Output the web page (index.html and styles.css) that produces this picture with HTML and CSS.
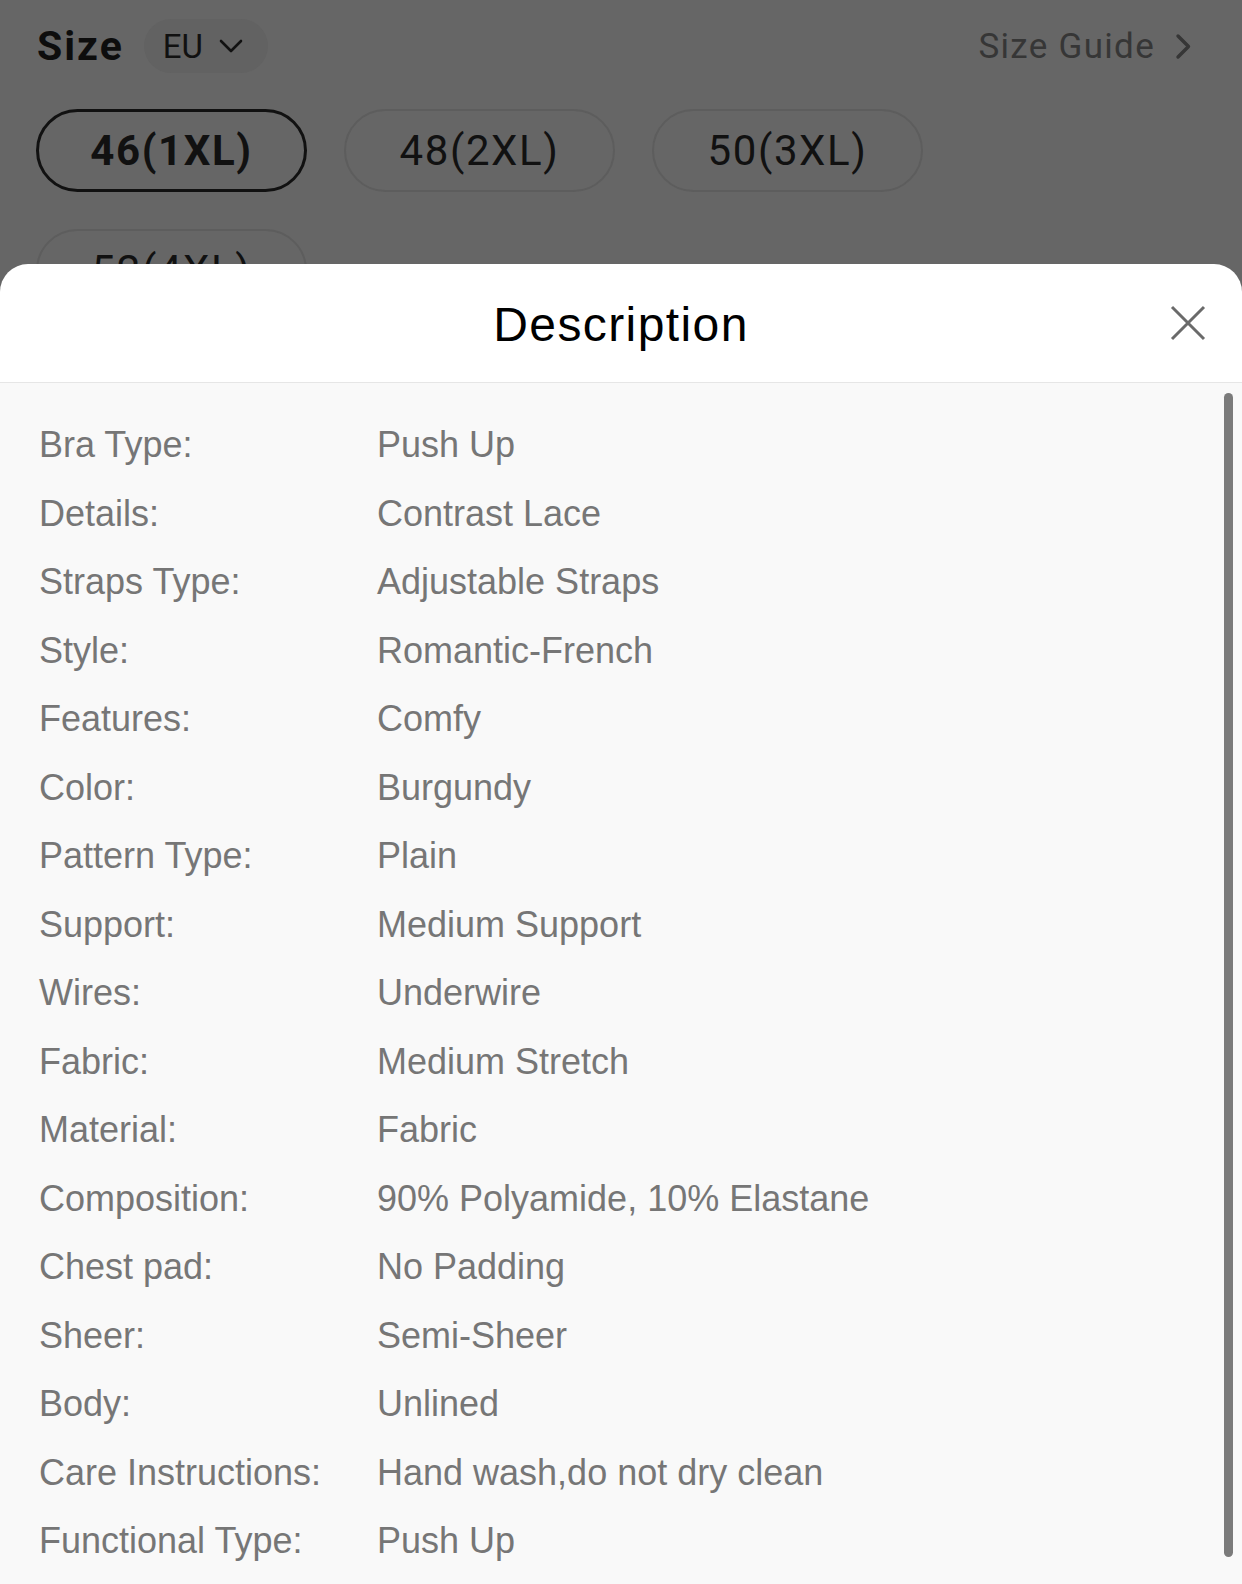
FILE: index.html
```html
<!DOCTYPE html>
<html lang="en">
<head>
    <meta charset="UTF-8">
    <meta name="viewport" content="width=device-width, initial-scale=1">
    <title>Description</title>
    <link rel="stylesheet" href="styles.css">
</head>
<body>
<div class="page">

    <section class="sizePanel">
        <div class="sizeHead">
            <div class="sizeLeft">
                <span class="sizeTitle">Size</span>
                <button type="button" class="unitBtn">EU
                    <svg width="24" height="14" viewBox="0 0 24 14"><path d="M2 2 L12 12 L22 2" fill="none" stroke="#111" stroke-width="2.6" stroke-linecap="round" stroke-linejoin="round"/></svg>
                </button>
            </div>
            <a class="sizeGuide">Size Guide
                <svg width="17" height="27" viewBox="0 0 17 27"><path d="M3 3 L13.5 13.5 L3 24" fill="none" stroke="#363636" stroke-width="3.4" stroke-linecap="round" stroke-linejoin="round"/></svg>
            </a>
        </div>
        <div class="sizeList">
            <button type="button" class="sizeOpt active">46(1XL)</button>
            <button type="button" class="sizeOpt">48(2XL)</button>
            <button type="button" class="sizeOpt">50(3XL)</button>
            <button type="button" class="sizeOpt">52(4XL)</button>
        </div>
    </section>

    <section class="sheet">
        <header class="sheetHead">
            <span></span>
            <h1 class="sheetTitle">Description</h1>
            <button type="button" class="closeBtn">
                <svg width="36" height="36" viewBox="0 0 36 36"><path d="M2 2 L34 34 M34 2 L2 34" fill="none" stroke="#6a6a6a" stroke-width="3"/></svg>
            </button>
        </header>
        <div class="sheetBody">
            <dl class="attrs">
                <dt>Bra Type:</dt><dd>Push Up</dd>
                <dt>Details:</dt><dd>Contrast Lace</dd>
                <dt>Straps Type:</dt><dd>Adjustable Straps</dd>
                <dt>Style:</dt><dd>Romantic-French</dd>
                <dt>Features:</dt><dd>Comfy</dd>
                <dt>Color:</dt><dd>Burgundy</dd>
                <dt>Pattern Type:</dt><dd>Plain</dd>
                <dt>Support:</dt><dd>Medium Support</dd>
                <dt>Wires:</dt><dd>Underwire</dd>
                <dt>Fabric:</dt><dd>Medium Stretch</dd>
                <dt>Material:</dt><dd>Fabric</dd>
                <dt>Composition:</dt><dd>90% Polyamide, 10% Elastane</dd>
                <dt>Chest pad:</dt><dd>No Padding</dd>
                <dt>Sheer:</dt><dd>Semi-Sheer</dd>
                <dt>Body:</dt><dd>Unlined</dd>
                <dt>Care Instructions:</dt><dd>Hand wash,do not dry clean</dd>
                <dt>Functional Type:</dt><dd>Push Up</dd>
            </dl>
            <div class="scrollThumb"></div>
        </div>
    </section>

</div>
</body>
</html>
```

FILE: styles.css
```css
html,body{
    margin:0;
    padding:0;
}
body{
    background-color:#666;
}
.page{
    height:1584px;
    display:flex;
    flex-direction:column;
    overflow:hidden;
}

/* dimmed page behind the sheet */
.sizePanel{
    flex:0 0 264px;
    overflow:hidden;
    background-color:#666;
    font-family:Roboto, "Liberation Sans", sans-serif;
    color:#111;
}
.sizeHead{
    display:flex;
    align-items:center;
    justify-content:space-between;
    height:54px;
    padding:19px 50px 0 37px;
}
.sizeLeft{
    display:flex;
    align-items:center;
}
.sizeTitle{
    font-size:41px;
    font-weight:bold;
    letter-spacing:2px;
    color:#0d0d0d;
    margin-right:20px;
}
.unitBtn{
    display:flex;
    align-items:center;
    gap:16px;
    width:124px;
    height:54px;
    padding:0 0 0 19px;
    border:none;
    border-radius:27px;
    background-color:#626262;
    font-family:inherit;
    font-size:33px;
    color:#111;
}
.sizeGuide{
    display:flex;
    align-items:center;
    gap:20px;
    font-size:35px;
    letter-spacing:1.3px;
    color:#363636;
}
.sizeList{
    display:flex;
    flex-wrap:wrap;
    gap:37px;
    margin-top:36px;
    padding:0 60px 0 36px;
}
.sizeOpt{
    width:271px;
    height:83px;
    border:2px solid #5d5d5d;
    border-radius:42px;
    background:transparent;
    font-family:inherit;
    font-size:42px;
    letter-spacing:1.6px;
    color:#111;
    padding:0;
}
.sizeOpt.active{
    border:3px solid #111;
    font-weight:bold;
}

/* bottom sheet */
.sheet{
    flex:1;
    display:flex;
    flex-direction:column;
    background-color:#fff;
    border-radius:28px 28px 0 0;
    overflow:hidden;
    font-family:"Liberation Sans", Arial, "Helvetica Neue", sans-serif;
}
.sheetHead{
    display:grid;
    grid-template-columns:1fr auto 1fr;
    align-items:center;
    height:118px;
    border-bottom:1px solid #e6e6e6;
}
.sheetTitle{
    margin:0;
    padding-top:3px;
    font-size:48px;
    font-weight:normal;
    letter-spacing:1.4px;
    color:#000;
}
.closeBtn{
    justify-self:end;
    margin-right:36px;
    padding:0;
    border:none;
    background:transparent;
    width:36px;
    height:36px;
}
.closeBtn svg{
    display:block;
}
.sheetBody{
    flex:1;
    position:relative;
    background-color:#f9f9f9;
    padding:28px 0 0 39px;
}
.attrs{
    display:grid;
    grid-template-columns:338px 1fr;
    margin:0;
    font-size:36px;
    line-height:68.5px;
    color:#767676;
}
.attrs dt,.attrs dd{
    margin:0;
    white-space:nowrap;
}
.scrollThumb{
    position:absolute;
    top:10px;
    right:9px;
    width:9px;
    height:1164px;
    border-radius:5px;
    background-color:#7b7b7b;
}
```
